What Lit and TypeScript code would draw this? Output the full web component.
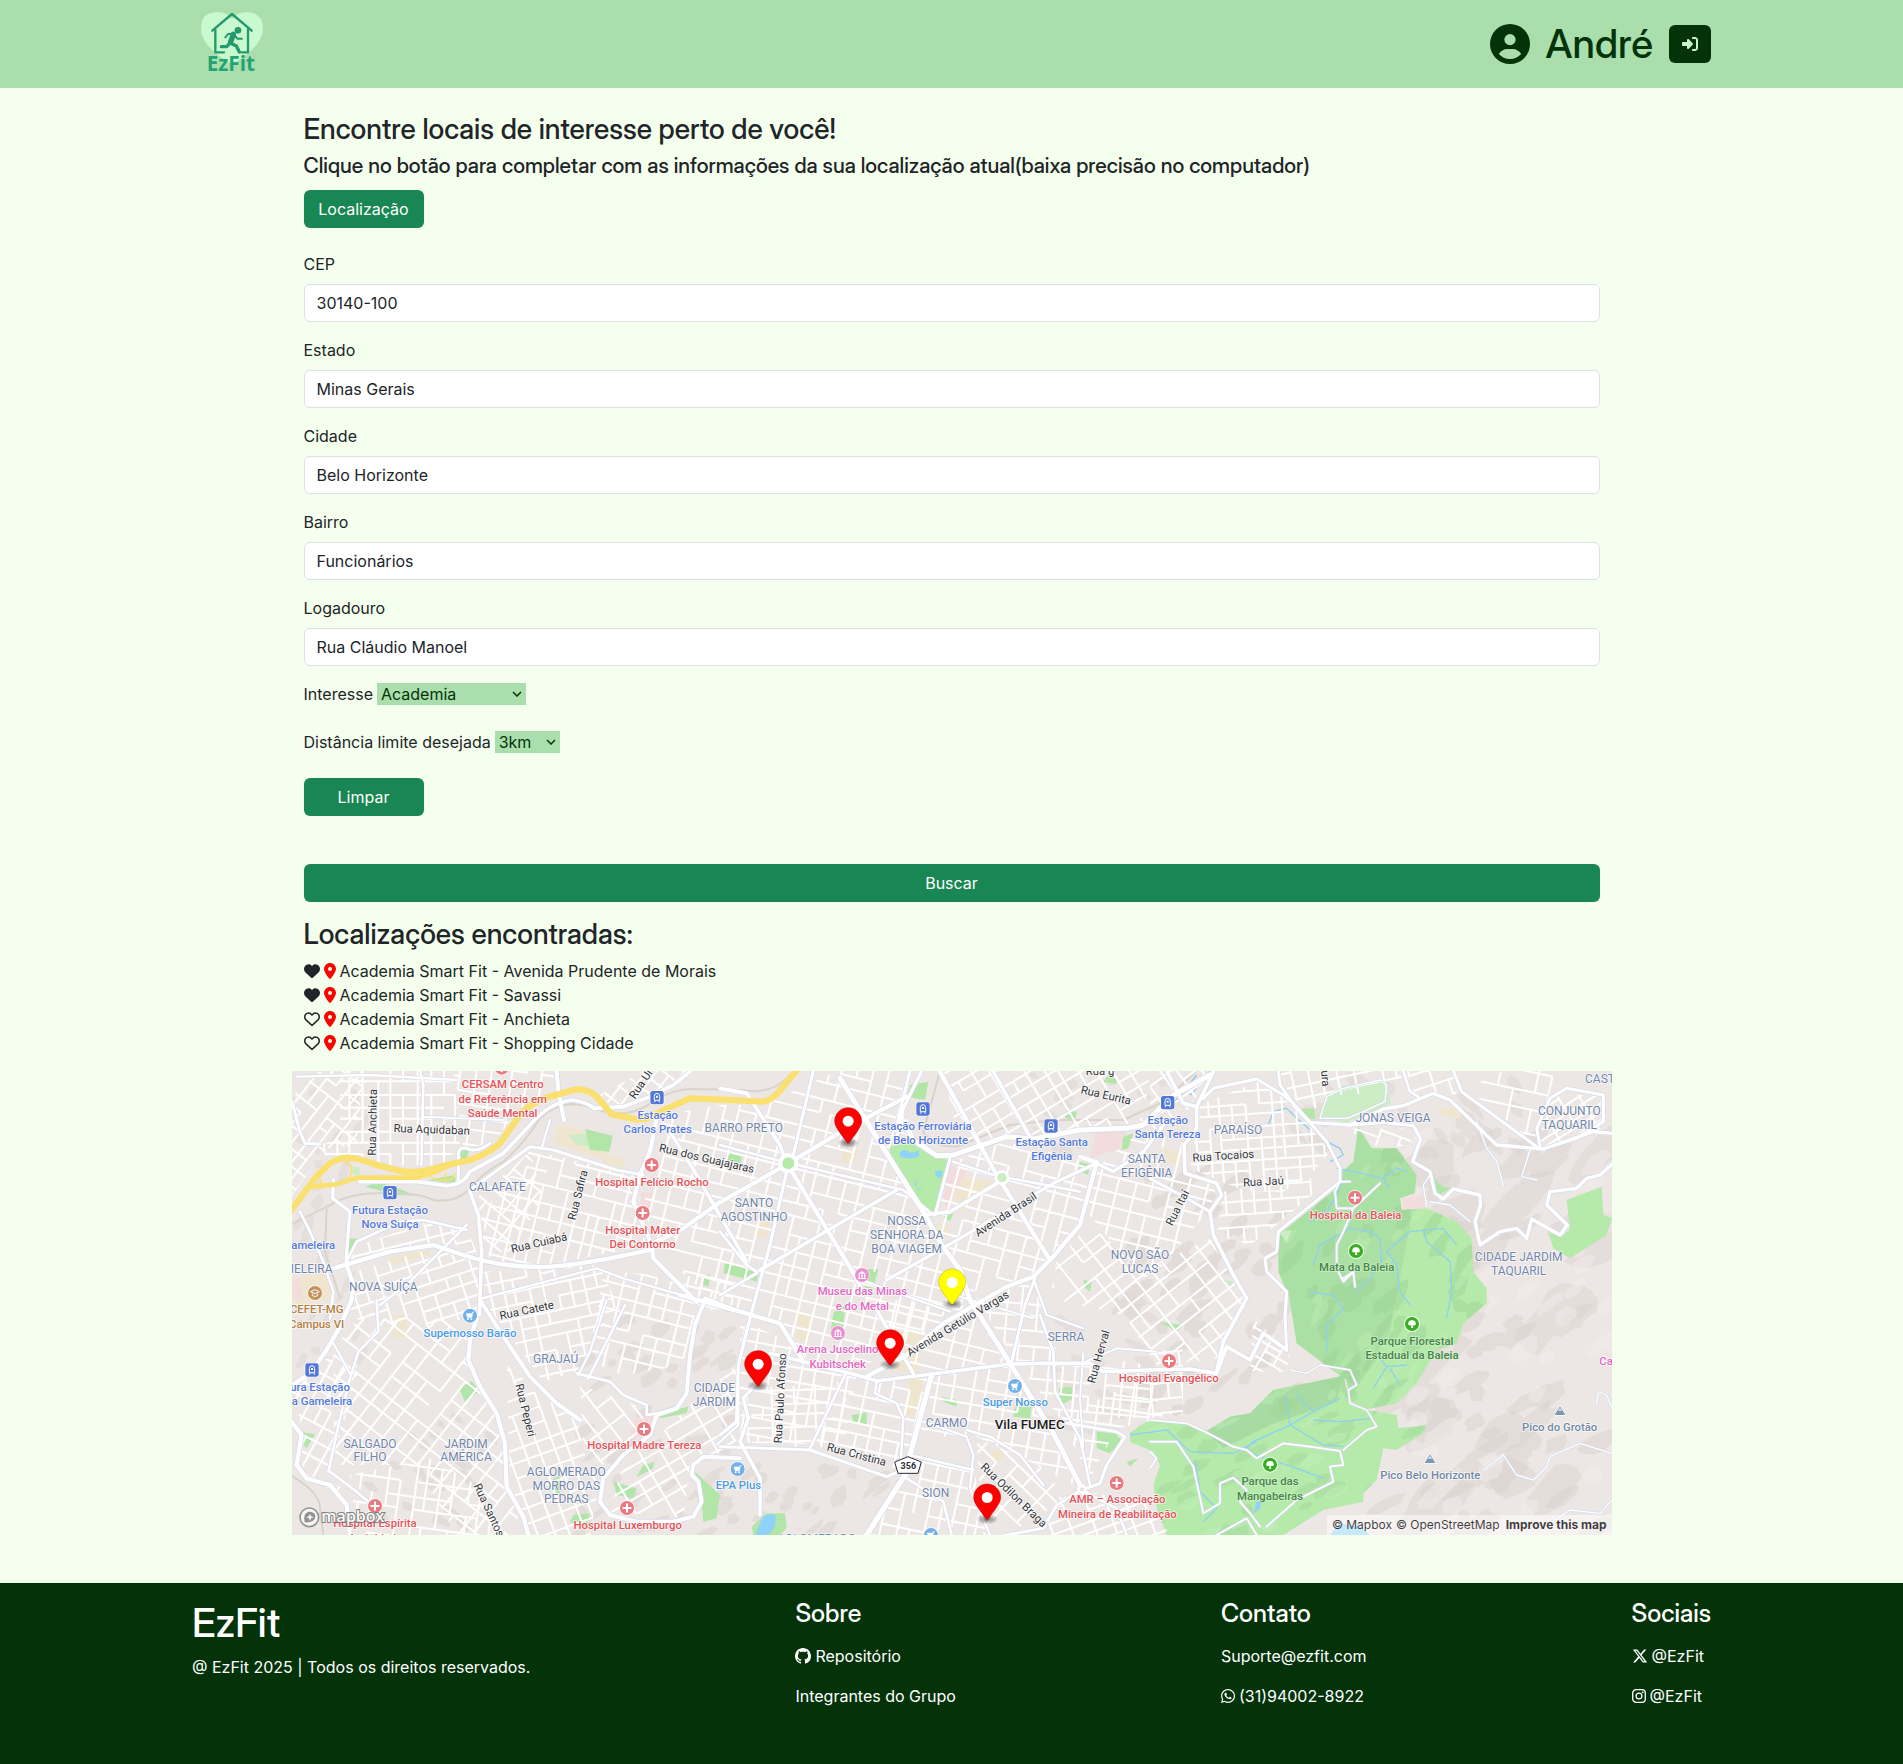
import { LitElement, html, svg, css } from "lit";
import { customElement, state } from "lit/decorators.js";

type Point = [number, number];

/* ---------- icons ---------- */

const ICONS = {
  user: ["0 0 512 512", "M399 384.2C376.9 345.8 335.4 320 288 320H224c-47.4 0-88.9 25.8-111 64.2c35.2 39.2 86.2 63.8 143 63.8s107.8-24.7 143-63.8zM0 256a256 256 0 1 1 512 0A256 256 0 1 1 0 256zm256 16a72 72 0 1 0 0-144 72 72 0 1 0 0 144z"],
  login: ["0 0 512 512", "M217.9 105.9L340.7 228.7c7.2 7.2 11.3 17.1 11.3 27.3s-4.1 20.1-11.3 27.3L217.9 406.1c-6.4 6.4-15 9.9-24 9.9c-18.7 0-33.9-15.2-33.9-33.9l0-62.1L32 320c-17.7 0-32-14.3-32-32l0-64c0-17.7 14.3-32 32-32l128 0 0-62.1c0-18.7 15.2-33.9 33.9-33.9c9 0 17.6 3.6 24 9.9zM352 416l64 0c17.7 0 32-14.3 32-32l0-256c0-17.7-14.3-32-32-32l-64 0c-17.7 0-32-14.3-32-32s14.3-32 32-32l64 0c53 0 96 43 96 96l0 256c0 53-43 96-96 96l-64 0c-17.7 0-32-14.3-32-32s14.3-32 32-32z"],
  heart: ["0 0 512 512", "M47.6 300.4L228.3 469.1c7.5 7 17.4 10.9 27.7 10.9s20.2-3.9 27.7-10.9L464.4 300.4c30.4-28.3 47.6-68 47.6-109.5v-5.8c0-69.9-50.5-129.5-119.4-141C347 36.5 300.6 51.4 268 84L256 96 244 84c-32.6-32.6-79-47.5-124.6-39.9C50.5 55.6 0 115.2 0 185.1v5.8c0 41.5 17.2 81.2 47.6 109.5z"],
  pin: ["0 0 384 512", "M215.7 499.2C267 435 384 279.4 384 192C384 86 298 0 192 0S0 86 0 192c0 87.4 117 243 168.3 307.2c12.3 15.3 35.1 15.3 47.4 0zM192 128a64 64 0 1 1 0 128 64 64 0 1 1 0-128z"],
  github: ["0 0 16 16", "M8 0C3.58 0 0 3.58 0 8c0 3.54 2.29 6.53 5.47 7.59.4.07.55-.17.55-.38 0-.19-.01-.82-.01-1.49-2.01.37-2.53-.49-2.69-.94-.09-.23-.48-.94-.82-1.13-.28-.15-.68-.52-.01-.53.63-.01 1.08.58 1.23.82.72 1.21 1.87.87 2.33.66.07-.52.28-.87.51-1.07-1.78-.2-3.64-.89-3.64-3.95 0-.87.31-1.59.82-2.15-.08-.2-.36-1.02.08-2.12 0 0 .67-.21 2.2.82.64-.18 1.32-.27 2-.27.68 0 1.36.09 2 .27 1.53-1.04 2.2-.82 2.2-.82.44 1.1.16 1.92.08 2.12.51.56.82 1.27.82 2.15 0 3.07-1.87 3.75-3.65 3.95.29.25.54.73.54 1.48 0 1.07-.01 1.93-.01 2.2 0 .21.15.46.55.38A8.01 8.01 0 0 0 16 8c0-4.42-3.58-8-8-8z"],
  whatsapp: ["0 0 448 512", "M380.9 97.1C339 55.1 283.2 32 223.9 32c-122.4 0-222 99.6-222 222 0 39.1 10.2 77.3 29.6 111L0 480l117.7-30.9c32.4 17.7 68.9 27 106.1 27h.1c122.3 0 224.1-99.6 224.1-222 0-59.3-25.2-115-67.1-157zm-157 341.6c-33.2 0-65.7-8.9-94-25.7l-6.7-4-69.8 18.3L72 359.2l-4.4-7c-18.5-29.4-28.2-63.3-28.2-98.2 0-101.7 82.8-184.5 184.6-184.5 49.3 0 95.6 19.2 130.4 54.1 34.8 34.9 56.2 81.2 56.1 130.5 0 101.8-84.9 184.6-186.6 184.6zm101.2-138.2c-5.5-2.8-32.8-16.2-37.9-18-5.1-1.9-8.8-2.8-12.5 2.8-3.7 5.6-14.3 18-17.6 21.8-3.2 3.7-6.5 4.2-12 1.4-32.6-16.3-54-29.1-75.5-66-5.7-9.8 5.7-9.1 16.3-30.3 1.8-3.7.9-6.9-.5-9.7-1.4-2.8-12.5-30.1-17.1-41.2-4.5-10.8-9.1-9.3-12.5-9.5-3.2-.2-6.9-.2-10.6-.2-3.7 0-9.7 1.4-14.8 6.9-5.1 5.6-19.4 19-19.4 46.3 0 27.3 19.9 53.7 22.6 57.4 2.8 3.7 39.1 59.7 94.8 83.8 35.2 15.2 49 16.5 66.6 13.9 10.7-1.6 32.8-13.4 37.4-26.4 4.6-13 4.6-24.1 3.2-26.4-1.3-2.5-5-3.9-10.5-6.6z"],
  x: ["0 0 512 512", "M389.2 48h70.6L305.6 224.2 487 464H345L233.7 318.6 106.5 464H35.8L200.7 275.5 26.8 48H172.4L272.9 180.9 389.2 48zM364.4 421.8h39.1L151.1 88h-42L364.4 421.8z"],
} as const;

const icon = (name: keyof typeof ICONS, cls = "") => html`
  <svg class="icon ${cls}" viewBox=${ICONS[name][0]} aria-hidden="true"><path d=${ICONS[name][1]} /></svg>`;

const heartOutline = html`
  <svg class="icon" viewBox="0 0 512 512" aria-hidden="true">
    <path fill="none" stroke="currentColor" stroke-width="48" stroke-linejoin="round"
      d="M64 283L244 451q12 11 24 0L448 283c26-24 40-58 40-92v-6c0-58-42-107-99-117-38-6-77 6-104 33l-29 30-29-30C200 74 161 62 123 68 66 78 24 127 24 185v6c0 34 14 68 40 92z" />
  </svg>`;

const instagram = html`
  <svg class="icon narrow" viewBox="0 0 14 16" aria-hidden="true">
    <rect x="0.7" y="1.7" width="12.6" height="12.6" rx="3.4" fill="none" stroke="currentColor" stroke-width="1.3" />
    <circle cx="7" cy="8" r="2.9" fill="none" stroke="currentColor" stroke-width="1.3" />
    <circle cx="10.7" cy="4.3" r="0.9" />
  </svg>`;

const chevron = html`
  <svg class="chevron" viewBox="0 0 10 6" aria-hidden="true"><path d="M1 1L5 5L9 1" fill="none" stroke="currentColor" stroke-width="1.5" /></svg>`;

/* ---------- map drawing ---------- */

/* Small repeatable generator so that the side streets and hills never change between renders. */
function sequence(seed: number) {
  let s = seed;
  return () => {
    s = (s * 1664525 + 1013904223) % 4294967296;
    return s / 4294967296;
  };
}

function bounds(points: string) {
  const list = points.split(" ").map((p) => p.split(",").map(Number) as Point);
  const xs = list.map((p) => p[0]);
  const ys = list.map((p) => p[1]);
  return { x0: Math.min(...xs), x1: Math.max(...xs), y0: Math.min(...ys), y1: Math.max(...ys) };
}

/* Side streets: [outline, angle, block width, block height] */
const BLOCKS: [string, number, number, number][] = [
  ["0,100 90,18 220,18 200,240 110,250 0,400", -52, 46, 34],
  ["150,18 490,18 510,240 460,300 300,300 190,270 110,280 90,240 150,220", 0, 40, 36],
  ["490,18 790,18 800,90 690,130 610,235 520,250", 8, 48, 38],
  ["930,90 1060,18 1190,18 1100,90 970,130", -52, 40, 30],
  ["720,255 1060,335 1030,420 1070,540 780,600 600,590 575,450", 14, 36, 46],
  ["560,400 720,260 760,400 660,560 575,560", 40, 48, 44],
  ["210,540 400,475 530,490 560,560 530,570 430,535 170,590", -14, 44, 36],
  ["190,620 430,550 570,590 570,750 400,790 180,760", -18, 46, 36],
  ["580,620 930,600 980,720 860,920 760,950 590,720", -12, 40, 38],
  ["940,620 1330,640 1330,730 1220,740 1180,900 1000,930 900,890", 14, 46, 42],
  ["130,850 210,760 540,760 540,930 640,1090 650,1260 700,1410 500,1410 380,1200 130,1200", 38, 44, 56],
  ["0,960 110,880 210,900 120,1220 170,1300 40,1230 30,1060", 28, 40, 48],
  ["180,1230 420,1180 560,1260 640,1410 200,1410", 8, 40, 44],
  ["650,900 860,1070 890,1180 930,1240 900,1410 730,1410 660,1260", -20, 42, 46],
  ["870,960 1060,1030 1060,1130 940,1200 880,1150", 52, 60, 46],
  ["1100,1120 1210,1010 1340,900 1340,1140 1200,1200 1180,1360 960,1340 1000,1190", -30, 52, 46],
  ["1120,150 1290,120 1420,120 1640,18 1830,18 1900,440 2040,700 1700,920 1540,880 1470,770 1290,720 1100,560 1060,420", 14, 46, 46],
  ["1350,760 1700,935 1660,1140 1350,1130", 10, 46, 44],
  ["1410,970 1660,950 1560,1150 1360,1130", -2, 70, 40],
  ["1700,950 1920,940 1850,1220 1680,1170 1570,1140", 12, 44, 42],
  ["1730,700 2030,720 2160,890 1880,925", 14, 50, 46],
  ["1930,930 2160,900 2300,1130 2370,1270 2200,1180 2050,1110 1880,1120", 10, 50, 46],
  ["1860,1180 2050,1215 2100,1410 1740,1410", 12, 40, 52],
  ["2060,1120 2250,1200 2330,1300 2150,1410 2080,1410", 44, 56, 44],
  ["1960,18 2580,18 2560,170 2230,215 2010,240", -31, 46, 42],
  ["1990,290 2140,230 2420,290 2370,480 2290,570 2230,640 2040,680 1920,450", 15, 50, 48],
  ["2380,430 2420,310 2560,190 2690,240 2690,330 2780,360 2760,430 2620,600 2560,640", 14, 54, 44],
  ["2300,590 2400,470 2550,620 2760,520 2860,700 2790,880 2600,900 2500,750 2280,700", -38, 50, 46],
  ["2060,700 2230,650 2300,860 2580,900 2580,1060 2310,1060 2170,880", 5, 46, 44],
  ["2310,1060 2580,930 2620,1060 2480,1090 2400,1240", 8, 50, 50],
  ["2580,18 2760,18 2700,130 2580,200", -36, 52, 42],
  ["2730,120 2900,50 3000,110 3120,260 3060,330 2980,380 2870,380 2700,310", -4, 38, 34],
  ["2800,380 3060,340 3100,360 2960,480 2880,540 2780,510", -4, 44, 40],
  ["2960,18 3330,18 3350,80 3140,90 3060,140 3000,90", -12, 44, 44],
  ["3160,190 3340,190 3370,240 3270,250", 20, 70, 28],
  ["3350,18 3500,18 3500,90 3430,80 3360,110", -18, 50, 44],
  ["3530,70 3640,18 3800,18 3770,110 3740,240", 12, 52, 60],
  ["3740,240 3790,90 3940,90 3930,200 3760,250", -32, 60, 24],
  ["2290,1300 2400,1280 2580,1320 2640,1410 2270,1410", 70, 34, 60],
  ["2890,760 3000,860 2990,920 2880,920", 30, 34, 26],
  ["2580,860 2680,850 2680,1040 2580,1060", -6, 44, 44],
];

const streetPaths = BLOCKS.map(([points, angle, w, h], index) => {
  const rnd = sequence(index * 97 + 11);
  const { x0, x1, y0, y1 } = bounds(points);
  const cx = (x0 + x1) / 2;
  const cy = (y0 + y1) / 2;
  const r = Math.hypot(x1 - x0, y1 - y0) / 2;
  const cols = Math.ceil(r / w);
  const rows = Math.ceil(r / h);
  const jitter = (n: number) => Array.from({ length: n * 2 + 2 }, () => (rnd() - 0.5) * 0.3);
  const jx = jitter(cols);
  const jy = jitter(rows);
  const px = (i: number) => Math.round(cx + (i + (jx[i + cols] ?? 0)) * w);
  const py = (j: number) => Math.round(cy + (j + (jy[j + rows] ?? 0)) * h);
  let d = "";
  for (let i = -cols; i <= cols; i++) {
    for (let j = -rows; j <= rows; j++) {
      if (rnd() > 0.1) d += `M${px(i)} ${py(j)}H${px(i + 1)}`;
      if (rnd() > 0.18) d += `M${px(i)} ${py(j)}V${py(j + 1)}`;
    }
  }
  return { id: `block-${index}`, points, d, turn: `rotate(${angle} ${cx} ${cy})` };
});

/* Relief: [outline, count, direction, size, colour] */
const RELIEF: [string, number, number, number, string][] = [
  ["3620,240 3966,240 3966,1410 3280,1410 3500,1000", 26, -42, 110, "#dcd4cf"],
  ["3400,200 3966,200 3966,1410 3280,1410 3500,1000", 60, -30, 52, "#dad2cd"],
  ["3400,200 3966,200 3966,1410 3280,1410 3500,1000", 44, -40, 44, "#f1ecea"],
  ["2780,350 3080,330 2980,900 2600,1080 2500,1000", 60, -40, 38, "#d8d0cb"],
  ["860,760 1340,760 1340,1410 860,1410", 55, -35, 30, "#d9d2ce"],
  ["0,18 220,18 200,400 0,900", 26, -60, 26, "#ddd6d2"],
  ["200,1050 620,1050 620,1410 200,1410", 26, 35, 24, "#dad3cf"],
  ["1300,1200 1800,1200 1800,1410 1300,1410", 22, -40, 26, "#d9d2ce"],
  ["2100,18 2640,18 2640,260 2300,200", 18, 30, 24, "#ded7d4"],
  ["3000,18 3700,18 3700,300 3340,240", 30, 50, 34, "#dbd4d0"],
  ["2260,700 2580,700 2580,1100 2300,1100", 22, 20, 26, "#ddd6d2"],
];

const GREEN_RELIEF: [string, number, number, number, string][] = [
  ["3160,190 3600,500 3600,760 3220,1030 2960,700 2960,480", 60, -55, 40, "#9bcf95"],
  ["3160,190 3600,500 3600,760 3220,1030 2960,700 2960,480", 40, -55, 30, "#c4f0ba"],
  ["2580,1060 3200,930 3420,1080 3200,1300 2900,1410 2500,1410", 60, -25, 36, "#9fd599"],
  ["2580,1060 3200,930 3420,1080 3200,1300 2900,1410 2500,1410", 36, -25, 28, "#c6f1bd"],
];

function blobs([points, count, angle, size]: [string, number, number, number, string], seed: number) {
  const rnd = sequence(seed * 53 + 7);
  const { x0, x1, y0, y1 } = bounds(points);
  const a = (angle * Math.PI) / 180;
  let d = "";
  for (let n = 0; n < count; n++) {
    const cx = x0 + rnd() * (x1 - x0);
    const cy = y0 + rnd() * (y1 - y0);
    const long = size * (0.5 + rnd());
    const short = size * (0.3 + rnd() * 0.4);
    for (let k = 0; k < 12; k++) {
      const t = (k / 12) * Math.PI * 2;
      const f = 0.75 + rnd() * 0.4;
      const u = Math.cos(t) * long * f;
      const v = Math.sin(t) * short * f;
      d += `${k ? "L" : "M"}${Math.round(cx + u * Math.cos(a) - v * Math.sin(a))} ${Math.round(cy + u * Math.sin(a) + v * Math.cos(a))}`;
    }
    d += "Z";
  }
  return d;
}

const WOODS = [
  "M3205 185L3245 250L3320 250L3380 330L3375 385L3330 400L3335 435L3410 430L3500 470L3545 520L3550 620L3590 670L3590 715L3520 775L3500 835L3440 855L3380 955L3320 1015L3220 1035L3180 1005L3170 945L3120 910L3020 835L2998 700L2965 620L2965 510L3140 370L3155 320L3190 290Z",
  "M2520 1105L2580 1062L2690 1077L2745 1100L2820 1055L2880 1045L2950 975L3160 932L3180 1015L3230 1035L3320 1050L3325 1090L3410 1080L3400 1105L3320 1155L3280 1150L3260 1245L3220 1285L3220 1310L3100 1335L2980 1410L2630 1410L2600 1330L2590 1260L2610 1200L2590 1160L2520 1130Z",
  "M3830 405L3935 365L3940 450L3966 460L3950 510L3840 580L3790 550L3775 505L3820 512L3840 490Z",
].join("");

const CITY_PARK = "M1800 245L1860 232L1930 275L1980 285L1935 447L1900 440L1800 265Z";

const SMALL_PARKS = [
  "M885 192L968 212L958 260L900 255Z", "M225 365L260 352L300 360L380 392L320 390Z", "M512 252L540 252L530 280L512 290Z",
  "M415 345L495 330L497 352L460 352Z", "M507 970L545 948L568 978L525 1010Z", "M1305 595L1350 605L1405 625L1400 650L1300 625Z",
  "M1315 262L1358 268L1350 295L1312 285Z", "M1860 60L1915 50L1905 105L1850 95Z", "M1630 745L1665 720L1660 790L1620 810Z",
  "M1725 612L1765 612L1750 670L1725 668Z", "M1960 455L1990 445L1980 468Z", "M1685 1050L1730 1042L1730 1080L1690 1070Z",
  "M1955 995L2000 1005L2000 1025L1960 1010Z", "M2175 1025L2225 1025L2220 1060L2170 1055Z", "M2305 970L2345 965L2350 1000L2315 1020Z",
  "M2420 1100L2475 1105L2495 1125L2460 1165L2420 1150Z", "M2370 290L2400 298L2395 330L2365 318Z", "M2330 135L2360 140L2355 165L2325 158Z",
  "M2500 215L2530 205L2515 250L2495 255Z", "M1100 1045L1195 1025L1190 1045L1110 1060Z", "M1215 1220L1290 1290L1280 1360L1240 1370L1235 1310Z",
  "M1060 1200L1095 1190L1085 1215L1040 1235Z", "M970 1250L1040 1270L1030 1300L980 1290Z", "M850 1350L900 1345L890 1390L840 1370Z",
  "M30 1100L75 1108L50 1150L40 1140Z", "M3030 132L3072 130L3075 162L3050 160Z", "M2380 645L2405 650L2400 680L2385 668Z",
  "M1240 630L1262 628L1255 665L1240 660Z", "M2450 35L2480 42L2478 58L2440 50Z", "M180 520L205 522L190 545L180 570L172 550Z",
  "M2610 770L2680 780L2660 800Z", "M3430 320L3440 395L3480 370L3570 380L3460 365L3440 350Z", "M790 1240L812 1230L810 1290L785 1275Z",
  "M2510 1190L2545 1180L2520 1205Z", "M1385 1385L1430 1345L1485 1345L1490 1390L1470 1410L1390 1410Z",
];

const PALE_PARKS = ["M3080 160L3110 85L3160 62L3290 38L3303 115L3220 150L3170 172Z", "M835 210L900 205L905 245L860 240Z", "M185 305L210 308L208 330L188 328Z", "M2965 500L3005 495L2990 530Z", "M2800 645L2830 650L2820 665Z"];

const SAND = [
  "M800 180L880 195L900 255L960 260L950 285L880 265L790 235Z", "M300 575L418 555L422 572L305 598Z", "M298 755L345 748L360 815L310 822Z",
  "M0 640L120 625L130 700L20 720Z", "M1985 335L2110 350L2105 370L2010 440L1970 360Z", "M1655 250L1705 255L1695 295L1655 290Z",
  "M1525 745L1570 750L1555 835L1515 820Z", "M1830 800L1900 805L1885 925L1810 915Z", "M1860 930L1905 940L1870 1060L1845 1050Z",
  "M2625 250L2680 265L2665 300L2625 290Z", "M1400 470L1440 475L1430 520L1390 510Z", "M2100 1165L2130 1150L2145 1175L2120 1190Z",
  "M945 270L1010 280L1000 305L940 300Z", "M3440 130L3515 130L3510 160L3450 150Z", "M1940 475L1980 480L1975 515L1930 510Z",
];

const ROSE = ["M2420 195L2500 200L2490 250L2400 280Z", "M1980 300L2030 320L1970 430L1960 400Z", "M3170 340L3200 335L3215 375L3210 410L3180 400Z", "M3120 640L3155 625L3160 660L3150 685L3122 680Z", "M1030 1060L1090 1050L1085 1120L1020 1115Z", "M1055 380L1090 385L1080 430L1050 420Z", "M3335 400L3400 390L3405 430L3340 435Z", "M0 650L30 640L40 700L0 705Z"];

const WATER = [
  "M1830 262q12-14 28 0q18 4 28-8l2 18q-20 14-58 4z", "M1935 320q14-10 25 2l-10 18q-16-6-15-20z", "M1880 345q-16 14 6 24l16 6q-24-2-24-16z",
  "M1396 1410L1418 1355Q1440 1342 1458 1352L1455 1385L1435 1410Z", "M2898 1310L2915 1308L2908 1335L2893 1345Z", "M3120 1410L3150 1375L3210 1385L3240 1410Z",
];

const STREAMS = [
  "M3140 310L3190 320L3280 340L3320 310L3350 320M3280 340L3300 370", "M3060 470L3110 440L3140 390L3160 340", "M3070 600L3090 540L3180 490L3240 500L3270 520L3275 590L3240 640L3200 680",
  "M3290 560L3360 500L3460 490L3500 540", "M3400 495L3410 530L3480 590L3485 680L3470 760", "M3290 560L3320 600L3330 680L3360 720", "M3055 680L3130 690L3160 730L3110 780L3110 860",
  "M3270 880L3290 905L3350 900M3290 905L3250 970M3300 910L3330 960", "M2985 990L3000 1080L2890 1130L2870 1150", "M3000 1080L3070 1040L3150 1000M3070 1040L3020 990", "M3000 1080L3100 1140L3160 1145M3070 1065L3150 1070L3250 1060",
  "M2520 1110L2630 1095L2700 1160L2830 1165L2900 1130", "M2715 1185L2730 1280L2780 1330L2740 1370M2880 1165L2960 1190L3020 1210L3100 1240", "M2935 180L2950 140L2990 130L3010 150L3060 195M3110 230L3150 250L3160 270L3120 290",
];

const CANAL = "M2760 20L2700 90M2720 30L2640 130";

/* Roads: [path, width] */
const ROADS: [string, number][] = [
  ["M6 110L30 200L45 235L90 238", 9], ["M390 18L400 60L394 300", 8], ["M20 35L240 30L500 45", 7], ["M395 155L640 165", 6],
  ["M130 345L128 400L180 440L170 560L168 600", 10], ["M30 440L60 500L100 590L130 680L120 760", 8],
  ["M210 350L380 350L470 362Q520 360 540 320L640 265L720 180Q780 110 850 105Q900 115 910 130L1000 125L1080 95L1150 60L1200 20", 11],
  ["M505 345L505 270Q505 245 530 250Q560 265 600 235", 9], ["M800 18L805 80L822 165", 12], ["M540 375L720 245L790 255L980 315L1060 330", 9],
  ["M780 165L755 250", 7], ["M1100 160L1080 260L1050 330L1030 410L1060 480L1085 540L1090 580L1220 710", 13], ["M1140 200L1220 330L1300 470L1370 590", 11],
  ["M1080 540L1180 490L1290 412L1470 310L1670 190L1850 95", 13], ["M130 610L300 560L430 540L520 570Q640 610 780 605Q850 600 960 580L1080 555", 13],
  ["M540 380L565 450L575 560L568 750", 11], ["M170 590L200 530L330 470L400 465L530 495", 8], ["M530 480L360 650L270 720", 8],
  ["M170 600L190 660L185 705L150 785L110 855L60 925L0 965", 13], ["M575 700L920 610L1000 640L1350 740", 7],
  ["M570 705L660 845L720 935L800 1015L870 1065", 12], ["M560 760L540 825L535 885L570 965L620 1045L645 1135L650 1265L700 1355L715 1410", 13],
  ["M260 705L265 800L205 860L180 940L150 1060L115 1220", 8], ["M130 835L180 925", 7], ["M0 1065L35 1110L20 1200L50 1240L120 1260L170 1320L180 1410", 13],
  ["M120 1220L200 1280L270 1340", 8], ["M950 705L900 860L865 930", 7], ["M1005 720L895 940", 8], ["M860 925L960 950L1000 990L1070 1020L1070 1050L1100 1045", 8],
  ["M1245 705L1215 780L1200 870L1190 985L1160 1030L1100 1050L1080 1110L1000 1170L940 1240L930 1310L960 1350L1040 1370L1150 1370L1210 1355L1235 1310L1225 1250L1205 1230L1210 1200L1240 1175L1350 1180", 12],
  ["M1280 1140L1345 1080L1345 960", 7], ["M1170 690L1350 740L1470 775L1540 890", 13], ["M1245 700L1350 740", 11],
  ["M1290 70L1370 85L1470 240L1490 300", 11], ["M1500 310L1700 640L1720 690", 13], ["M1490 320L1440 540L1380 760L1345 900L1340 1070L1290 1110", 10],
  ["M1510 270L1570 18", 9], ["M1290 240L1480 290L1840 375L1930 450", 8], ["M1290 500L1370 600L1400 620", 9], ["M1290 690L1400 625", 9],
  ["M1650 40L1790 265L1900 440L1955 540L2010 615L2040 705L2160 895L2290 1105L2375 1270", 15], ["M1950 20L2120 330L2280 585", 13], ["M2110 20L2225 225", 11],
  ["M1980 280L1935 450", 9], ["M1900 450L1980 440L2130 350", 11], ["M1895 18L1840 130L1820 220", 10], ["M1860 18L1820 180", 9],
  ["M1830 150L1870 225L1940 272L1990 270L2150 215L2230 222L2370 195L2510 190L2560 180L2650 90L2760 30", 15],
  ["M1790 645L2010 520L2290 355L2420 295L2470 320L2560 260L2620 180", 10], ["M1410 615L1820 375", 11], ["M2370 275L2420 292L2370 480L2285 580L2230 635L2150 665L1960 775L1850 870L1730 935", 13],
  ["M1440 865L1700 930L1760 948L2160 897L2250 895L2400 895L2440 920L2580 915L2700 912L2780 925L2810 845L2880 885L2920 805L2990 855", 11],
  ["M1760 735L1870 925", 11], ["M1925 930L1860 1170L1845 1230L1730 1410", 16], ["M2235 640L2205 720L2165 890", 9], ["M1290 1145L1560 1155L1790 1235L1840 1215", 9],
  ["M1395 960L1360 1000L1375 1060L1350 1130L1410 1240L1410 1350", 11], ["M1665 930L1560 1150", 8], ["M1760 950L1755 985L1820 1015L1840 1060L1832 1200", 8],
  ["M1850 1240L1960 1310L1985 1410", 8], ["M1900 1070L2030 1115L2050 1170L2040 1270L2100 1410", 7], ["M2030 1095L2100 1115L2190 1170L2260 1260", 8],
  ["M2250 750L2290 860L2295 980L2370 1120L2400 1260", 8], ["M2330 1075L2480 1100L2505 1115L2450 1200L2430 1255L2375 1275L2300 1320L2260 1390L2150 1410", 9],
  ["M1860 1170L2050 1215", 8], ["M2230 640L2270 750L2380 790", 7], ["M2380 865L2370 1005L2380 1145", 6], ["M1990 290L2110 330L2370 380", 8],
  ["M2375 1275L2480 1330L2510 1410", 8], ["M2375 895L2480 850L2600 860", 6], ["M1960 680L2230 760", 6], ["M1700 640L1980 740", 7],
  ["M2630 18L2680 115L2720 125L2770 20", 11], ["M2720 125L2720 190L2682 240L2685 325L2780 355L2795 390L2760 440L2770 510L2830 630L2870 700L2800 830L2780 920", 11],
  ["M2580 340L2690 400L2760 440", 9], ["M2740 100L2770 70L2900 42L2980 90L3010 115L3110 230L3150 310L3150 350L2965 500L2960 560L2925 580L2930 620L2990 680L2985 760L2990 850", 9],
  ["M2965 18L2970 60L3005 110", 9], ["M3010 120L3060 172L3180 180L3280 132L3340 122L3430 85L3480 105L3620 240L3760 252L3910 200L3966 205", 10],
  ["M3180 180L3280 172L3370 182L3392 222L3368 290L3420 320L3435 385L3460 402L3490 372L3570 390L3572 420L3555 470L3570 540L3630 500L3680 490L3710 520L3725 462L3810 510L3832 480L3770 420L3780 380L3860 370L3890 340L3930 330L3966 298", 10],
  ["M3490 18L3515 80L3740 245", 9], ["M3340 18L3360 80L3385 95", 8], ["M3750 245L3740 190L3780 100L3830 70L3940 90L3940 170L3860 220L3780 245", 9],
  ["M2580 1065L2690 1075L2745 1100L2830 1145L2870 1155L2900 1180L2980 1135L3060 1145L3150 1158L3160 1200L3120 1205L3130 1250L3020 1305L2930 1385", 5],
  ["M2580 1130L2660 1130L2710 1205L2740 1345L2790 1315L2790 1255L2830 1238L2870 1275L2850 1310L2880 1345L2910 1385M2780 1410L2870 1360L2900 1410", 5],
  ["M3160 1155L3230 1095L3260 1085L3230 1035L3180 1015L3175 975L3200 960L3180 915L3090 900L3050 925L3000 915", 4],
  ["M3580 1215L3640 1170L3680 1230L3730 1245L3770 1205L3780 1175L3870 1135L3966 1165", 4], ["M3780 1375L3840 1335L3930 1345L3966 1305", 4], ["M3920 1020L3925 980L3950 990L3966 1030", 4],
  ["M3140 430L3135 380L3150 350L3180 350M3140 430L3190 430L3270 355M3190 430L3160 500L3140 540L3140 610L3160 650L3190 620M3160 640L3190 620L3195 665", 5],
  ["M3410 425L3400 360L3420 330M3540 470L3480 420L3420 410M3720 255L3695 335L3740 345M3560 170L3590 250L3620 290L3640 360", 4],
  ["M3090 160L3110 95L3160 70L3270 45L3290 60L3285 110L3220 140L3170 160Z", 4], ["M2580 1160L2600 1180L2580 1210", 5],
];

const YELLOW: [string, number][] = [
  ["M0 440L60 360Q80 330 100 315Q130 278 175 278Q210 280 260 300L340 320Q400 325 450 305L540 285Q620 255 640 220L690 150Q720 110 790 92L850 75Q890 68 920 95L965 148L1040 163Q1080 165 1100 145L1200 100L1350 106L1415 110Q1440 108 1460 88L1525 10", 19],
  ["M60 365L140 358L200 338L380 338Q420 330 470 305", 14], ["M95 320Q82 345 100 358M165 290Q190 300 184 325Q180 345 150 352M390 312Q430 350 465 346L468 325M495 325Q490 350 465 345", 5],
];

const RAIL = "M0 480L150 405Q200 385 260 385Q380 380 430 405Q500 415 540 370Q570 330 640 290Q700 240 750 160Q790 120 850 118Q900 120 940 140Q1020 160 1090 110Q1150 70 1210 72L1350 75Q1440 90 1490 40M110 430L105 560L150 700M1950 18L1900 200Q1920 245 2000 245L2160 180L2300 165L2500 165L2620 110L2720 18M0 1230Q90 1280 90 1330L100 1410";

type Kind = "health" | "train" | "culture" | "shop" | "park" | "peak" | "school" | "area" | "road" | "place";

/* Labels: [x, baseline of first line, kind, lines, angle] */
const LABELS: [number, number, Kind, string[], number?][] = [
  [638, 70, "health", ["CERSAM Centro", "de Referência em", "Saúde Mental"]],
  [1086, 363, "health", ["Hospital Felício Rocho"]],
  [1058, 506, "health", ["Hospital Mater", "Dei Contorno"]],
  [1063, 1153, "health", ["Hospital Madre Tereza"]],
  [1013, 1392, "health", ["Hospital Luxemburgo"]],
  [255, 1387, "health", ["Hospital Espírita", "André Luiz"]],
  [3197, 461, "health", ["Hospital da Baleia"]],
  [2636, 951, "health", ["Hospital Evangélico"]],
  [2482, 1315, "health", ["AMR – Associação", "Mineira de Reabilitação"]],
  [1103, 161, "train", ["Estação", "Carlos Prates"]],
  [300, 446, "train", ["Futura Estação", "Nova Suíça"]],
  [58, 552, "train", ["Gameleira"]],
  [66, 978, "train", ["Futura Estação", "Nova Gameleira"]],
  [1899, 194, "train", ["Estação Ferroviária", "de Belo Horizonte"]],
  [2285, 243, "train", ["Estação Santa", "Efigênia"]],
  [2633, 176, "train", ["Estação", "Santa Tereza"]],
  [1717, 691, "culture", ["Museu das Minas", "e do Metal"]],
  [1643, 865, "culture", ["Arena Juscelino", "Kubitschek"]],
  [3948, 900, "culture", ["Ca"]],
  [540, 815, "shop", ["Supernosso Barão"]],
  [1345, 1273, "shop", ["EPA Plus"]],
  [2176, 1023, "shop", ["Super Nosso"]],
  [3200, 619, "park", ["Mata da Baleia"]],
  [3366, 839, "park", ["Parque Florestal", "Estadual da Baleia"]],
  [2940, 1261, "park", ["Parque das", "Mangabeiras"]],
  [3809, 1097, "peak", ["Pico do Grotão"]],
  [3421, 1243, "peak", ["Pico Belo Horizonte"]],
  [80, 745, "school", ["CEFET-MG", "Campus VI"]],
  [2219, 1093, "place", ["Vila FUMEC"]],
  [622, 379, "area", ["CALAFATE"]],
  [1361, 200, "area", ["BARRO PRETO"]],
  [30, 624, "area", ["GAMELEIRA"]],
  [280, 678, "area", ["NOVA SUÍÇA"]],
  [797, 894, "area", ["GRAJAÚ"]],
  [1273, 981, "area", ["CIDADE", "JARDIM"]],
  [240, 1148, "area", ["SALGADO", "FILHO"]],
  [528, 1148, "area", ["JARDIM", "AMÉRICA"]],
  [829, 1233, "area", ["AGLOMERADO", "MORRO DAS", "PEDRAS"]],
  [1392, 427, "area", ["SANTO", "AGOSTINHO"]],
  [1850, 481, "area", ["NOSSA", "SENHORA DA", "BOA VIAGEM"]],
  [2570, 294, "area", ["SANTA", "EFIGÊNIA"]],
  [2550, 582, "area", ["NOVO SÃO", "LUCAS"]],
  [2328, 829, "area", ["SERRA"]],
  [1970, 1086, "area", ["CARMO"]],
  [1937, 1296, "area", ["SION"]],
  [2844, 206, "area", ["PARAÍSO"]],
  [3309, 170, "area", ["JONAS VEIGA"]],
  [3838, 150, "area", ["CONJUNTO", "TAQUARIL"]],
  [3930, 53, "area", ["CAST"]],
  [3686, 589, "area", ["CIDADE JARDIM", "TAQUARIL"]],
  [1580, 1434, "area", ["AGLOMERADO"]],
  [247, 172, "road", ["Rua Anchieta"], -89],
  [425, 193, "road", ["Rua Aquidaban"], 2],
  [863, 390, "road", ["Rua Safira"], -76],
  [747, 533, "road", ["Rua Cuiabá"], -13],
  [710, 735, "road", ["Rua Catete"], -12],
  [707, 1035, "road", ["Rua Peperi"], 76],
  [598, 1335, "road", ["Rua Santos"], 65],
  [1250, 280, "road", ["Rua dos Guajajaras"], 13],
  [1058, 48, "road", ["Rua Uru"], -56],
  [2448, 90, "road", ["Rua Eurita"], 13],
  [2430, 18, "road", ["Rua g"], 0],
  [2800, 272, "road", ["Rua Tocaios"], -4],
  [2920, 349, "road", ["Rua Jaú"], -3],
  [2662, 428, "road", ["Rua Itaí"], -63],
  [3107, 40, "road", ["ura"], 85],
  [2147, 448, "road", ["Avenida Brasil"], -33],
  [2003, 775, "road", ["Avenida Getúlio Vargas"], -31],
  [1470, 1000, "road", ["Rua Paulo Afonso"], -87],
  [1700, 1168, "road", ["Rua Cristina"], 15],
  [2172, 1290, "road", ["Rua Odilon Braga"], 44],
  [2425, 875, "road", ["Rua Herval"], -74],
];

const SPOTS: [number, number, Kind][] = [
  [635, 8, "health"], [1085, 300, "health"], [1058, 444, "health"], [1062, 1092, "health"], [1011, 1329, "health"], [255, 1323, "health"],
  [3195, 398, "health"], [2637, 888, "health"], [2480, 1254, "health"],
  [1101, 98, "train"], [300, 383, "train"], [66, 915, "train"], [2283, 183, "train"], [2633, 113, "train"], [1899, 132, "train"],
  [1716, 630, "culture"], [1644, 804, "culture"],
  [540, 752, "shop"], [1343, 1212, "shop"], [2175, 963, "shop"], [1923, 1410, "shop"],
  [3198, 558, "park"], [3366, 777, "park"], [2940, 1199, "park"],
  [3810, 1038, "peak"], [3420, 1182, "peak"], [75, 684, "school"],
];

const PINS: [number, number, string, string][] = [
  [1674, 128, "#ff0000", "#b30000"],
  [1404, 857, "#ff0000", "#b30000"],
  [1800, 794, "#ff0000", "#b30000"],
  [2091, 1257, "#ff0000", "#b30000"],
  [1986, 612, "#ffff00", "#b3b300"],
];

function spot([x, y, kind]: [number, number, Kind]) {
  const at = `translate(${x} ${y})`;
  switch (kind) {
    case "health":
      return svg`<g transform=${at}><circle class="halo" r="23" /><circle r="21" fill="#ea7a80" /><path d="M0 -11V11M-11 0H11" stroke="#fff" stroke-width="6" stroke-linecap="round" /></g>`;
    case "train":
      return svg`<g transform=${at}><rect class="halo" x="-22" y="-22" width="44" height="44" rx="9" /><rect x="-20" y="-20" width="40" height="40" rx="7" fill="#5377d8" /><path d="M-8 8V-4Q-8 -13 0 -13Q8 -13 8 -4V8ZM-8 14L-4 8M8 14L4 8" fill="none" stroke="#fff" stroke-width="3" /><path d="M-3 -6H3V0H-3Z" fill="#fff" /></g>`;
    case "culture":
      return svg`<g transform=${at}><circle class="halo" r="23" /><circle r="21" fill="#ec8fd0" /><path d="M-12 -4L0 -12L12 -4ZM-10 -2H-6V8H-10ZM-2 -2H2V8H-2ZM6 -2H10V8H6ZM-12 9H12V12H-12Z" fill="#fff" /></g>`;
    case "shop":
      return svg`<g transform=${at}><circle class="halo" r="23" /><circle r="21" fill="#72b0ea" /><path d="M12 -11L7 -10L5 5H-8M-11 -6H7L5 3H-8Z" fill="#fff" stroke="#fff" stroke-width="2" /><circle cx="-6" cy="10" r="3" fill="#fff" /><circle cx="4" cy="10" r="3" fill="#fff" /></g>`;
    case "park":
      return svg`<g transform=${at}><circle class="halo" r="24" /><circle r="21" fill="#3aae22" /><path d="M-3 12L-1 4Q-14 6 -11 -3Q-10 -12 0 -11Q10 -12 11 -3Q14 6 2 4L4 12Z" fill="#fff" /></g>`;
    case "peak":
      return svg`<g transform=${at}><path d="M0 -18L19 14H-19Z" class="halo" /><path d="M0 -14L16 12H-16Z" fill="#7d97b0" /><path d="M0 -9L6 1L0 -2L-6 1Z" fill="#fff" /></g>`;
    default:
      return svg`<g transform=${at}><circle class="halo" r="23" /><circle r="21" fill="#c3925a" /><path d="M-13 -4L0 -10L13 -4L0 2ZM-8 2V8Q0 13 8 8V2" fill="none" stroke="#fff" stroke-width="3" /></g>`;
  }
}

@customElement("place-map")
class PlaceMap extends LitElement {
  static styles = css`
    :host { display: block; position: relative; }
    .canvas { display: block; width: 100%; height: auto; background: #ece7e5; }
    .halo { fill: #ffffff; opacity: 0.85; }
    .label { font-family: Roboto, "Liberation Sans", sans-serif; font-size: 34px; font-weight: 500; text-anchor: middle; paint-order: stroke; stroke: #ffffff; stroke-opacity: 0.75; stroke-width: 5px; stroke-linejoin: round; }
    .health { fill: #e5535a; }
    .train { fill: #5478dc; }
    .culture { fill: #e667c2; }
    .shop { fill: #4b9ce6; }
    .park { fill: #46854a; stroke: #d4f3cc; }
    .peak { fill: #7189a6; }
    .school { fill: #b5803f; }
    .area { fill: #7186ab; font-weight: 400; font-size: 36px; }
    .road { fill: #33363b; font-weight: 400; dominant-baseline: central; }
    .place { fill: #1c1c1c; font-size: 40px; }
    .shield { font-size: 27px; font-weight: 700; fill: #2a2d3a; stroke: none; }
    .brand { font-family: "Open Sans", sans-serif; font-size: 48px; font-weight: 600; fill: #ffffff; stroke: #6f6f6f; stroke-width: 6px; paint-order: stroke; opacity: 0.85; }
    .credits { position: absolute; right: 0; bottom: 0; display: flex; gap: 4px; padding: 0 5px; background: rgba(255, 255, 255, 0.5); font: 12px/20px Inter, sans-serif; }
    .credits a { color: rgba(0, 0, 0, 0.75); text-decoration: none; }
    .credits .improve { font-weight: 700; margin-left: 2px; }
  `;

  render() {
    return html`
      <svg class="canvas" viewBox="6 18 3960 1392" role="img" aria-label="Mapa de Belo Horizonte">
        <defs>
          ${streetPaths.map((b) => svg`<clipPath id=${b.id}><polygon points=${b.points} /></clipPath>`)}
          <clipPath id="woods"><path d=${WOODS} /></clipPath>
          <radialGradient id="shade"><stop offset="0" stop-color="#000" stop-opacity="0.55" /><stop offset="1" stop-color="#000" stop-opacity="0" /></radialGradient>
        </defs>
        ${RELIEF.map((r, i) => svg`<path d=${blobs(r, i)} fill=${r[4]} opacity="0.5" />`)}
        <path d=${SAND.join("")} fill="#f0e6d0" />
        <path d=${ROSE.join("")} fill="#f3dcdc" />
        <path d=${WOODS} fill="#b5eaaa" />
        <g clip-path="url(#woods)">
          <path d="M3205 185L3245 250L3320 250L3380 330L3360 480L3300 800L3180 1005L3020 835L2998 700L2965 620L2965 510L3140 370L3155 320L3190 290Z" fill="#abe0a4" />
          <path d="M2745 1100L2820 1055L2950 975L3160 932L3140 1010L2940 1080L2800 1150Z" fill="#a7dba1" />
          ${GREEN_RELIEF.map((r, i) => svg`<path d=${blobs(r, i + 30)} fill=${r[4]} opacity="0.4" />`)}
        </g>
        <path d=${PALE_PARKS.join("")} fill="#ccecc5" />
        <path d=${SMALL_PARKS.join("")} fill="#b1e6a8" />
        <path d=${STREAMS.join("")} fill="none" stroke="#8fd0ee" stroke-width="4" />
        <path d=${CANAL} fill="none" stroke="#9fc9ee" stroke-width="6" />
        <path d=${RAIL} fill="none" stroke="#dad3c9" stroke-width="6" />
        ${streetPaths.map((b) => svg`<g clip-path=${`url(#${b.id})`}><path d=${b.d} transform=${b.turn} fill="none" stroke="#ffffff" stroke-width="6" /></g>`)}
        <path d=${CITY_PARK} fill="#b5eaaa" />
        <path d=${WATER.join("")} fill="#8fd3f8" />
        <g fill="none" stroke-linejoin="round" stroke-linecap="round">
          ${ROADS.map(([d, w]) => svg`<path d=${d} stroke="#d6daea" stroke-width=${w + 4} />`)}
          ${ROADS.map(([d, w]) => svg`<path d=${d} stroke="#ffffff" stroke-width=${w} />`)}
          ${YELLOW.map(([d, w]) => svg`<path d=${d} stroke="#f9e06f" stroke-width=${w} />`)}
        </g>
        <circle cx="1495" cy="295" r="24" fill="#b5eaaa" stroke="#ffffff" stroke-width="12" />
        <circle cx="2136" cy="338" r="18" fill="#cdeec5" stroke="#ffffff" stroke-width="8" />
        <circle cx="2376" cy="1273" r="10" fill="#e4dfe0" stroke="#ffffff" stroke-width="8" />
        ${SPOTS.map(spot)}
        ${LABELS.map(([x, y, kind, lines, angle = 0]) => svg`
          <text class="label ${kind}" transform="translate(${x} ${y}) rotate(${angle})">
            ${lines.map((line, i) => svg`<tspan x="0" y=${i * (kind === "area" ? 41 : 43)}>${line}</tspan>`)}
          </text>`)}
        <path d="M1854 1175L1894 1191L1884 1225H1824L1814 1191Z" fill="#fff" stroke="#2a2d3a" stroke-width="3" />
        <text class="label shield" x="1855" y="1213">356</text>
        ${PINS.map(([x, y, fill, edge]) => svg`
          <g transform="translate(${x - 40} ${y}) scale(3)">
            <ellipse cx="13.5" cy="35" rx="11" ry="5.5" fill="url(#shade)" />
            <path d="M27 13.5C27 19.07 20.25 27 14.75 34.5C14.02 35.5 12.98 35.5 12.25 34.5C6.75 27 0 19.22 0 13.5C0 6.04 6.04 0 13.5 0S27 6.04 27 13.5Z" fill=${fill} stroke=${edge} stroke-width="0.5" />
            <circle cx="13.5" cy="13.5" r="5.5" fill="#fff" />
          </g>`)}
        <g opacity="0.9">
          <circle cx="58" cy="1357" r="28" fill="#ffffff" fill-opacity="0.7" stroke="#8b8b8b" stroke-width="5" />
          <path d="M44 1372Q38 1344 56 1340Q76 1340 76 1356Q74 1374 44 1372Z" fill="#8b8b8b" />
          <path d="M60 1346L63 1354L71 1357L63 1360L60 1368L57 1360L49 1357L57 1354Z" fill="#ffffff" />
        </g>
        <text class="brand" x="94" y="1371">mapbox</text>
      </svg>
      <div class="credits">
        <a href="#mapbox">© Mapbox</a><a href="#osm">© OpenStreetMap</a><a class="improve" href="#improve">Improve this map</a>
      </div>`;
  }
}

/* ---------- page ---------- */

@customElement("app-root")
class AppRoot extends LitElement {
  @state() private fields = [
    { id: "cep", label: "CEP", value: "30140-100" },
    { id: "estado", label: "Estado", value: "Minas Gerais" },
    { id: "cidade", label: "Cidade", value: "Belo Horizonte" },
    { id: "bairro", label: "Bairro", value: "Funcionários" },
    { id: "logradouro", label: "Logadouro", value: "Rua Cláudio Manoel" },
  ];

  @state() private places = [
    { name: "Academia Smart Fit - Avenida Prudente de Morais", liked: true },
    { name: "Academia Smart Fit - Savassi", liked: true },
    { name: "Academia Smart Fit - Anchieta", liked: false },
    { name: "Academia Smart Fit - Shopping Cidade", liked: false },
  ];

  static styles = css`
    :host { display: flex; flex-direction: column; min-height: 100vh; background: #f5ffed; color: #212529; font: 16px/24px Inter, "Liberation Sans", sans-serif; }
    *, *::before, *::after { box-sizing: border-box; }
    h1, h2, h3, p, ul { margin: 0; padding: 0; font-weight: 500; }
    h1, h2, .hint, .account { font-family: "Inter Display", Inter, "Liberation Sans", sans-serif; }
    button, input, select { font: inherit; }
    button { cursor: pointer; }
    .icon { width: 16px; height: 16px; fill: currentColor; flex: none; }
    .narrow { width: 14px; }

    .topbar { display: flex; justify-content: space-between; align-items: center; height: 88px; padding: 0 192px; background: #aadfad; color: #04330a; }
    .logo { display: block; }
    .logo svg { display: block; width: 80px; height: 88px; }
    .logo-name { font: 700 62px "Open Sans", sans-serif; fill: #24a474; }
    .account { display: flex; align-items: center; gap: 16px; font-size: 40px; line-height: 48px; font-weight: 500; }
    .avatar { width: 40px; height: 40px; }
    .login { display: grid; place-items: center; width: 42px; height: 38px; padding: 0; border: 0; border-radius: 6px; background: #04330a; color: #c9f5cc; }

    .page { width: 100%; max-width: 1320px; margin: 0 auto; padding: 24px 0 48px; }
    .panel { padding: 0 12px; }
    .title { font-size: 28px; line-height: 34px; }
    .hint { margin-top: 8px; font-size: 21px; line-height: 24px; }
    .button { display: block; min-width: 120px; height: 38px; padding: 0 12px; border: 0; border-radius: 6px; background: #198754; color: #ffffff; }
    .locate { margin: 12px 0 24px; }
    .field { margin-bottom: 16px; }
    .field label { display: block; margin-bottom: 8px; }
    .field input { display: block; width: 100%; height: 38px; padding: 6px 12px; border: 1px solid #dee2e6; border-radius: 6px; background: #ffffff; color: #212529; }
    .choice { display: flex; align-items: center; gap: 4px; margin-bottom: 24px; }
    .picker { position: relative; display: flex; color: #04330a; }
    .picker select { width: 100%; height: 22px; padding: 0 4px; border: 0; border-radius: 0; appearance: none; background-color: #aadfad; color: inherit; line-height: 22px; }
    .chevron { position: absolute; right: 4px; top: 8px; width: 10px; height: 6px; pointer-events: none; }
    .interest { width: 149px; }
    .distance { width: 65px; }
    .search { width: 100%; margin: 48px 0 15px; }
    .found { display: grid; margin: 8px 0 16px; list-style: none; font-weight: 400; }
    .place { display: flex; align-items: center; gap: 4px; font-weight: 400; }
    .like { display: grid; padding: 0; border: 0; background: none; color: inherit; }
    .pin { width: 12px; color: #ff0000; }

    .footer { flex: 1; display: flex; justify-content: space-between; align-items: flex-start; padding: 16px 192px; background: #04330a; color: #ffffff; }
    .footer a { display: flex; align-items: center; gap: 4px; color: inherit; text-decoration: none; }
    .column { display: flex; flex-direction: column; gap: 16px; }
    .column h2 { font-size: 25px; line-height: 29px; }
    .about { gap: 8px; }
    .about h2 { font-size: 40px; line-height: 48px; }
    .about p { font-weight: 400; }
  `;

  private setField(index: number, value: string) {
    this.fields = this.fields.map((f, i) => (i === index ? { ...f, value } : f));
  }

  private clear() {
    this.fields = this.fields.map((f) => ({ ...f, value: "" }));
  }

  private toggle(index: number) {
    this.places = this.places.map((p, i) => (i === index ? { ...p, liked: !p.liked } : p));
  }

  render() {
    return html`
      <header class="topbar">
        <a class="logo" href="#inicio" aria-label="EzFit">
          <svg viewBox="36 0 240 264" aria-hidden="true">
            <path d="M156 192Q63 140 63 84Q64 38 110 36Q140 36 156 58Q172 36 202 36Q248 38 249 84Q249 140 156 192Z" fill="#c9f9cf" />
            <g fill="none" stroke="#249a6c" stroke-linecap="round" stroke-linejoin="round">
              <path d="M97 92L156 42L215 92M106 88V157H132M204 88V157H184" stroke-width="7" />
              <path d="M158 104L149 128L169 138L178 156M149 130L140 140H124" stroke-width="10" />
              <path d="M136 112L144 102L160 101L172 116H186" stroke-width="6" />
              <path d="M160 103L152 126" stroke-width="16" />
            </g>
            <circle cx="174" cy="91" r="10" fill="#249a6c" />
            <text class="logo-name" x="80" y="214">EzFit</text>
          </svg>
        </a>
        <div class="account">
          ${icon("user", "avatar")}
          <span>André</span>
          <button class="login" type="button" aria-label="Sair">${icon("login")}</button>
        </div>
      </header>

      <main class="page">
        <div class="panel">
          <h1 class="title">Encontre locais de interesse perto de você!</h1>
          <p class="hint">Clique no botão para completar com as informações da sua localização atual(baixa precisão no computador)</p>
          <button class="button locate" type="button">Localização</button>
          ${this.fields.map((f, i) => html`
            <div class="field">
              <label for=${f.id}>${f.label}</label>
              <input id=${f.id} type="text" .value=${f.value}
                @input=${(e: Event) => this.setField(i, (e.target as HTMLInputElement).value)} />
            </div>`)}
          <div class="choice">
            <label for="interesse">Interesse</label>
            <div class="picker interest">
              <select id="interesse"><option>Academia</option><option>Parque</option></select>${chevron}
            </div>
          </div>
          <div class="choice">
            <label for="distancia">Distância limite desejada</label>
            <div class="picker distance">
              <select id="distancia"><option>3km</option><option>5km</option></select>${chevron}
            </div>
          </div>
          <button class="button" type="button" @click=${this.clear}>Limpar</button>
          <button class="button search" type="button">Buscar</button>
          <h2 class="title">Localizações encontradas:</h2>
          <ul class="found">
            ${this.places.map((p, i) => html`
              <li class="place">
                <button class="like" type="button" aria-label="Favoritar" @click=${() => this.toggle(i)}>
                  ${p.liked ? icon("heart") : heartOutline}
                </button>
                ${icon("pin", "pin")}
                <span>${p.name}</span>
              </li>`)}
          </ul>
        </div>
        <place-map></place-map>
      </main>

      <footer class="footer">
        <div class="column about">
          <h2>EzFit</h2>
          <p>@ EzFit 2025 | Todos os direitos reservados.</p>
        </div>
        <div class="column">
          <h2>Sobre</h2>
          <a href="#repositorio">${icon("github")}Repositório</a>
          <a href="#grupo">Integrantes do Grupo</a>
        </div>
        <div class="column">
          <h2>Contato</h2>
          <a href="mailto:Suporte@ezfit.com">Suporte@ezfit.com</a>
          <a href="#whatsapp">${icon("whatsapp", "narrow")}(31)94002-8922</a>
        </div>
        <div class="column">
          <h2>Sociais</h2>
          <a href="#x">${icon("x")}@EzFit</a>
          <a href="#instagram">${instagram}@EzFit</a>
        </div>
      </footer>`;
  }
}
